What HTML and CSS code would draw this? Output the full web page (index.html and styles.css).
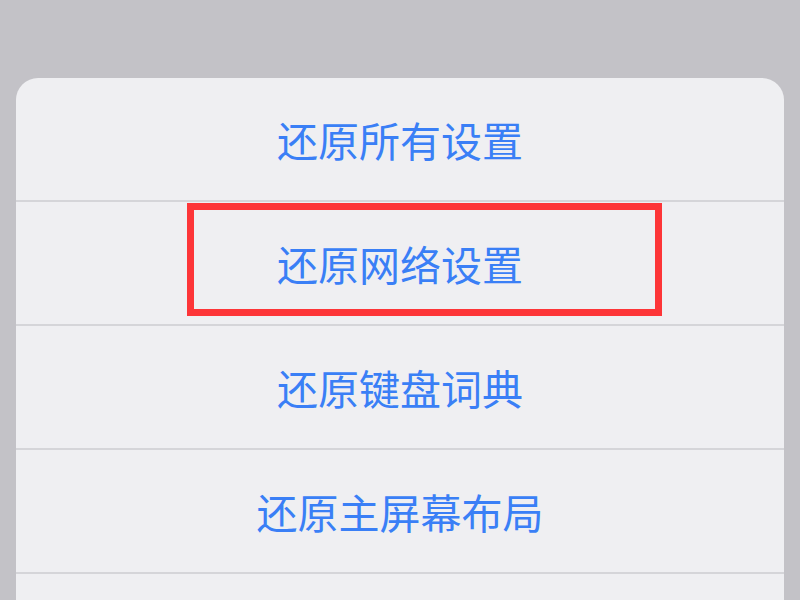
FILE: index.html
```html
<!DOCTYPE html>
<html lang="zh-CN">
<head>
  <meta charset="UTF-8" />
  <meta name="viewport" content="width=device-width, initial-scale=1.0"/>
  <title>还原</title>
  <link rel="stylesheet" href="styles.css">
</head>
<body>
  <div class="sheet">
    <div class="row">还原所有设置</div>
    <div class="row highlighted">
      还原网络设置
      <span class="mark"></span>
    </div>
    <div class="row">还原键盘词典</div>
    <div class="row">还原主屏幕布局</div>
    <div class="row rest"></div>
  </div>
</body>
</html>
```

FILE: styles.css
```css
html, body {
  height: 100%;
}

body {
  font-family: "Noto Sans CJK SC", "Noto Sans", sans-serif;
  margin: 0;
  padding: 78px 16px 0;
  box-sizing: border-box;
  background-color: #c3c2c7;
  overflow: hidden;
}

.sheet {
  background-color: #efeff2;
  border-radius: 22px 22px 0 0;
}

.row {
  position: relative;
  height: 122px;
  display: flex;
  align-items: center;
  justify-content: center;
  font-size: 41px;
  color: #3a7ff6;
  border-bottom: 2px solid #d5d5d9;
}

.row.rest {
  height: 26px;
  border-bottom: none;
}

.mark {
  position: absolute;
  left: 171px;
  top: 1px;
  width: 475px;
  height: 113px;
  border: 7px solid #fd3538;
  box-sizing: border-box;
}
```
